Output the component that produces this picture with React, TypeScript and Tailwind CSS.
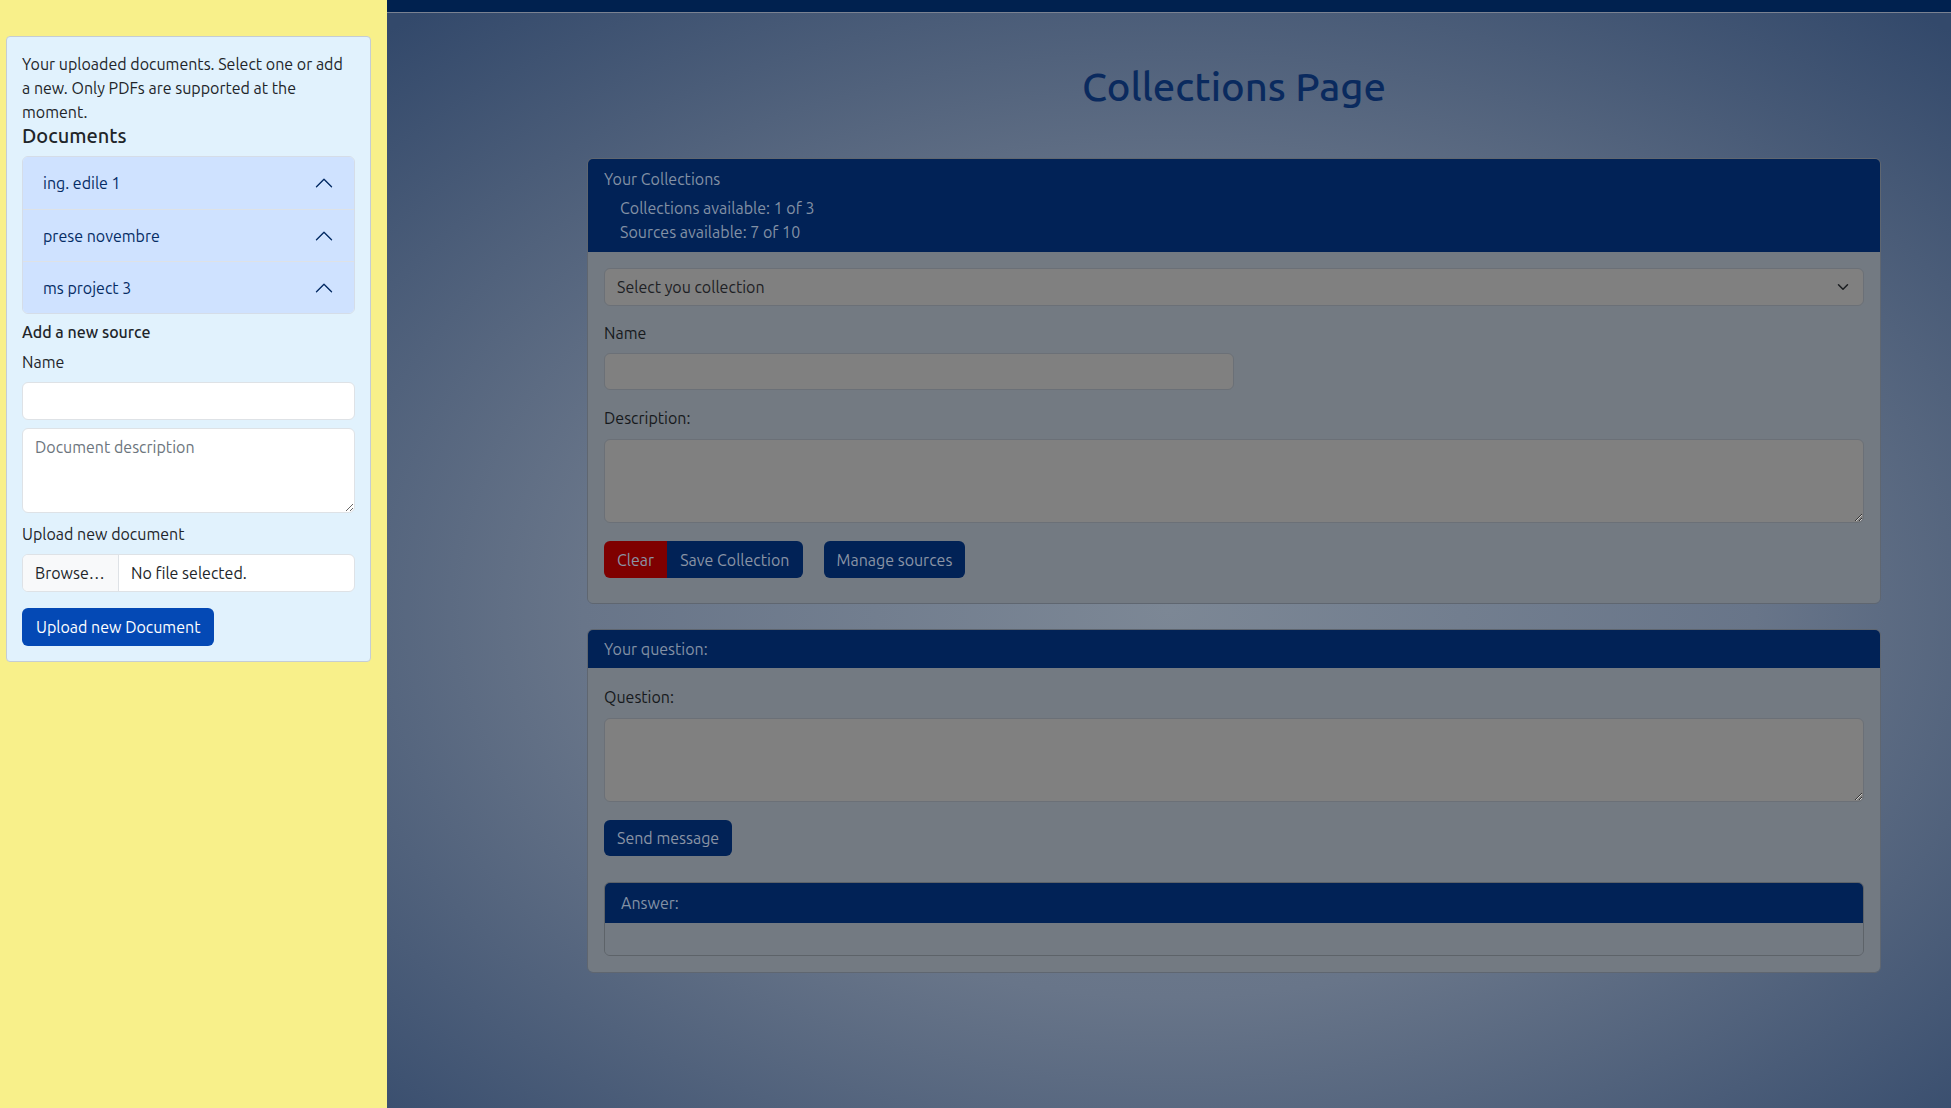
import React from "react";

function ChevronUp() {
  return (
    <svg width="20" height="20" viewBox="0 0 16 16" fill="none" stroke="#052c65" strokeWidth="1.1" strokeLinecap="round" strokeLinejoin="round">
      <path d="M2 11L8 5L14 11" />
    </svg>
  );
}

function SelectChevron() {
  return (
    <svg width="16" height="12" viewBox="0 0 16 16" fill="none" stroke="#1a1d20" strokeWidth="2" strokeLinecap="round" strokeLinejoin="round">
      <path d="M2 5l6 6 6-6" />
    </svg>
  );
}

const docs = ["ing. edile 1", "prese novembre", "ms project 3"];

function Sidebar() {
  return (
    <div className="w-[387px] shrink-0 bg-[#f8f08a] pl-[6px] pt-[36px]">
      <div className="w-[365px] rounded-[4px] border border-[#c5cdd4] bg-[#e1f2fd] px-[15px] pt-[15px] pb-[15px] text-[16px] text-[#212529]">
        <p className="pr-1 leading-6">Your uploaded documents. Select one or add a new. Only PDFs are supported at the moment.</p>
        <h5 className="mb-2 text-[20px] font-medium leading-6">Documents</h5>
        <div className="overflow-hidden rounded-[6px] border border-[#d5dde8]">
          {docs.map((d, i) => (
            <div
              key={d}
              className={
                "flex h-[52px] items-center justify-between bg-[#cfe2ff] pl-5 pr-5 text-[#052c65] " +
                (i > 0 ? "border-t border-[#dee2e6]" : "")
              }
            >
              <span>{d}</span>
              <ChevronUp />
            </div>
          ))}
        </div>
        <div className="mt-[6px] font-medium leading-6">Add a new source</div>
        <div className="mt-[6px] leading-6">Name</div>
        <input className="mt-2 block h-[38px] w-full rounded-[6px] border border-[#dee2e6] bg-white px-3 outline-none" />
        <textarea
          placeholder="Document description"
          className="mt-2 block h-[85px] w-full rounded-[6px] border border-[#dee2e6] bg-white px-3 py-[6px] leading-6 outline-none placeholder:text-[#6c757d]"
        />
        <div className="mt-[9px] leading-6">Upload new document</div>
        <div className="mt-2 flex h-[38px] w-full overflow-hidden rounded-[6px] border border-[#dee2e6] bg-white">
          <div className="flex w-[96px] items-center border-r border-[#dee2e6] bg-[#f8f9fa] px-3">Browse…</div>
          <div className="flex items-center pl-[12px]">No file selected.</div>
        </div>
        <button className="mt-4 block h-[38px] rounded-[6px] bg-[#0449b5] px-[14px] text-white">Upload new Document</button>
      </div>
    </div>
  );
}

function Main() {
  return (
    <div className="flex min-w-0 flex-1 flex-col bg-[radial-gradient(ellipse_75%_70%_at_50%_55%,#7c8795_0%,#687589_50%,#33496b_100%)]">
      <div className="h-[13px] shrink-0 border-b border-[#7a8292] bg-[#00214f]" />
      <div className="pl-[200px] pr-[70px]">
        <h1 className="mt-[50px] text-center text-[40px] font-medium leading-[48px] text-[#0a2a5e]">Collections Page</h1>

        <div className="mt-[47px] overflow-hidden rounded-[6px] border border-[#5f6670]">
          <div className="bg-[#012256] px-4 py-2 text-[#8391a5]">
            <div className="leading-6">Your Collections</div>
            <ul className="mt-[5px] pl-4 leading-6">
              <li>Collections available: 1 of 3</li>
              <li>Sources available: 7 of 10</li>
            </ul>
          </div>
          <div className="bg-[#737a82] px-4 pt-4 pb-[25px]">
            <div className="flex h-[38px] items-center justify-between rounded-[6px] border border-[#6b7077] bg-[#808080] pl-3 pr-3 text-[#1d2024]">
              <span>Select you collection</span>
              <SelectChevron />
            </div>
            <div className="mt-[15px] leading-6 text-[#16191c]">Name</div>
            <div className="mt-2 h-[37px] w-1/2 rounded-[6px] border border-[#6b7077] bg-[#808080]" />
            <div className="mt-4 leading-6 text-[#16191c]">Description:</div>
            <textarea className="mt-[9px] block h-[84px] w-full rounded-[6px] border border-[#6b7077] bg-[#808080] outline-none" />
            <div className="mt-[18px] flex gap-[21px]">
              <div className="flex h-[37px] overflow-hidden rounded-[6px] text-[#8a94a5]">
                <div className="flex items-center bg-[#7f0000] px-[13px]">Clear</div>
                <div className="flex items-center bg-[#012256] px-[13px]">Save Collection</div>
              </div>
              <div className="flex h-[37px] items-center rounded-[6px] bg-[#012256] px-[13px] text-[#8a94a5]">Manage sources</div>
            </div>
          </div>
        </div>

        <div className="mt-[25px] overflow-hidden rounded-[6px] border border-[#5f6670]">
          <div className="bg-[#012256] px-4 py-2 leading-[22px] text-[#8391a5]">Your question:</div>
          <div className="bg-[#737a82] px-4 pt-[17px] pb-4">
            <div className="leading-6 text-[#16191c]">Question:</div>
            <textarea className="mt-[9px] block h-[84px] w-full rounded-[6px] border border-[#6b7077] bg-[#808080] outline-none" />
            <div className="mt-[18px] flex">
              <div className="flex h-[36px] items-center rounded-[6px] bg-[#012256] px-[13px] text-[#8a94a5]">Send message</div>
            </div>
            <div className="mt-[26px] overflow-hidden rounded-[6px] border border-[#5d6369]">
              <div className="bg-[#012256] px-4 py-2 leading-6 text-[#8391a5]">Answer:</div>
              <div className="h-[32px] bg-[#737a82]" />
            </div>
          </div>
        </div>
      </div>
    </div>
  );
}

export default function App() {
  return (
    <div className="flex h-[1108px] w-full overflow-hidden font-['Ubuntu','Roboto',sans-serif] text-[16px]">
      <Sidebar />
      <Main />
    </div>
  );
}
